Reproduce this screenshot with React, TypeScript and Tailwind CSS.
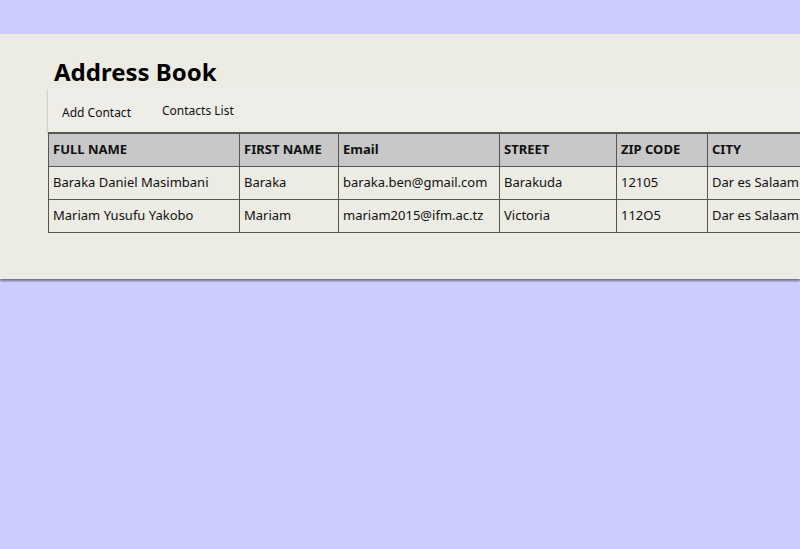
export default function App() {
  const cols = [
    { name: "FULL NAME", w: "w-[191px]" },
    { name: "FIRST NAME", w: "w-[99px]" },
    { name: "Email", w: "w-[161px]" },
    { name: "STREET", w: "w-[117px]" },
    { name: "ZIP CODE", w: "w-[91px]" },
    { name: "CITY", w: "w-[120px]" },
  ];
  const rows = [
    ["Baraka Daniel Masimbani", "Baraka", "baraka.ben@gmail.com", "Barakuda", "12105", "Dar es Salaam"],
    ["Mariam Yusufu Yakobo", "Mariam", "mariam2015@ifm.ac.tz", "Victoria", "112O5", "Dar es Salaam"],
  ];
  return (
    <div className="min-h-[549px] w-[800px] overflow-hidden bg-[#ccccff] pt-[34px] font-['Liberation_Sans',Arial,sans-serif] text-[13px] text-[#111]">
      <div className="h-[245px] bg-[#ecebe4] shadow-[0_2px_2px_rgba(0,0,0,0.45)] pl-[48px] pt-[24px]">
        <h1 className="ml-[6px] text-[24px] font-bold leading-[28px] text-black">Address Book</h1>
        <div className="mt-[2px] flex h-[44px] w-[800px] items-start gap-[31px] bg-[#eeede7] pl-[14px] pt-[14px] shadow-[0_2px_2px_rgba(0,0,0,0.35)] text-[12px]">
          <span className="mt-[2px]">Add Contact</span>
          <span>Contacts List</span>
        </div>
        <table className="table-fixed border-collapse w-[779px]">
          <thead>
            <tr className="h-[33px] bg-[#c8c8c8] border-t-2 border-[#555]">
              {cols.map((c) => (
                <th key={c.name} className={`${c.w} border border-[#555] px-[4px] text-left font-bold`}>{c.name}</th>
              ))}
            </tr>
          </thead>
          <tbody>
            {rows.map((r) => (
              <tr key={r[0]} className="h-[33px]">
                {r.map((v, i) => (
                  <td key={i} className="border border-[#555] px-[4px] whitespace-nowrap">{v}</td>
                ))}
              </tr>
            ))}
          </tbody>
        </table>
      </div>
    </div>
  );
}
